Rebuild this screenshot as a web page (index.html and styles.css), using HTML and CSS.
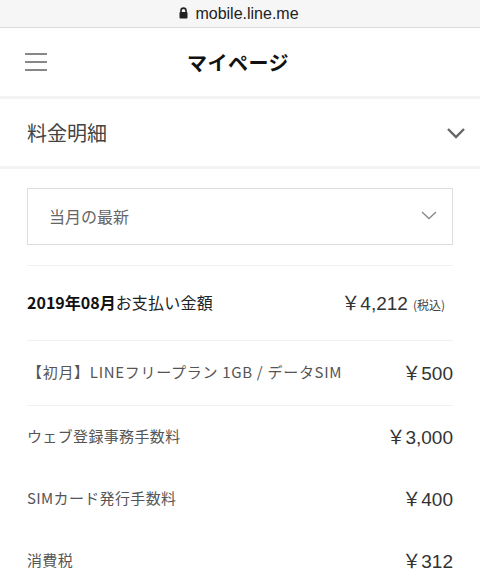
FILE: index.html
```html
<!DOCTYPE html>
<html lang="ja">
<head>
<meta charset="utf-8">
<title>マイページ</title>
<link rel="stylesheet" href="styles.css">
</head>
<body>
<div class="urlbar">
  <svg class="lock" width="9" height="12" viewBox="0 0 9 12"><path d="M2 5.5V3.6a2.5 2.5 0 0 1 5 0V5.5" fill="none" stroke="#222" stroke-width="1.6"/><rect x="0.5" y="5" width="8" height="6.5" rx="1" fill="#222"/></svg>
  <span>mobile.line.me</span>
</div>
<header class="header">
  <div class="burger"><span></span><span></span><span></span></div>
  <h1 class="title">マイページ</h1>
  <div></div>
</header>
<div class="sep"></div>
<div class="section-head">
  <h2>料金明細</h2>
  <svg width="20" height="12" viewBox="0 0 20 12"><path d="M2 2l8 8 8-8" fill="none" stroke="#666" stroke-width="2.4"/></svg>
</div>
<div class="sep"></div>
<main class="content">
  <div class="select">
    <span>当月の最新</span>
    <svg width="16" height="9" viewBox="0 0 16 9"><path d="M1 1l7 6.5L15 1" fill="none" stroke="#888" stroke-width="1.3"/></svg>
  </div>
  <div class="row total">
    <div><b>2019年08月</b>お支払い金額</div>
    <div class="total-amt">￥4,212<small>(税込)</small></div>
  </div>
  <div class="row item first">
    <span>【初月】LINEフリープラン 1GB / データSIM</span>
    <span class="amt">￥500</span>
  </div>
  <div class="row item">
    <span>ウェブ登録事務手数料</span>
    <span class="amt">￥3,000</span>
  </div>
  <div class="row item">
    <span>SIMカード発行手数料</span>
    <span class="amt">￥400</span>
  </div>
  <div class="row item">
    <span>消費税</span>
    <span class="amt">￥312</span>
  </div>
</main>
</body>
</html>
```
FILE: styles.css
```css
html, body {
  margin: 0;
  padding: 0;
  background: #fff;
  font-family: "Noto Sans CJK JP", "Noto Sans", sans-serif;
  color: #333;
  overflow: hidden;
}
.urlbar {
  height: 27px;
  background: #f6f6f6;
  border-bottom: 1px solid #dcdcdc;
  display: flex;
  align-items: center;
  justify-content: center;
  gap: 7px;
  font-family: "Liberation Sans", "Noto Sans", sans-serif;
  font-size: 16px;
  color: #222;
  padding-right: 2px;
}
.lock { margin-top: -1px; }
.header {
  height: 68px;
  display: grid;
  grid-template-columns: 1fr auto 1fr;
  align-items: center;
  padding-left: 25px;
  padding-right: 25px;
}
.burger {
  display: flex;
  flex-direction: column;
  gap: 6px;
  width: 22px;
}
.burger span {
  display: block;
  height: 2px;
  background: #888;
}
.title {
  margin: 0;
  font-size: 20px;
  font-weight: 700;
  color: #111;
  letter-spacing: 0.5px;
  position: relative;
  left: -2px;
}
.sep {
  height: 3px;
  background: #f3f3f3;
}
.section-head {
  height: 67px;
  display: flex;
  align-items: center;
  justify-content: space-between;
  padding: 0 14px 0 27px;
}
.section-head h2 {
  margin: 0;
  font-size: 20px;
  font-weight: 400;
  color: #444;
}
.content {
  padding: 19px 27px 0;
}
.select {
  height: 53px;
  border: 1px solid #dedede;
  display: flex;
  align-items: center;
  justify-content: space-between;
  padding: 0 15px 2px 21px;
  font-size: 16px;
  color: #666;
}
.row {
  display: flex;
  align-items: center;
  justify-content: space-between;
  box-sizing: border-box;
  padding-bottom: 3px;
}
.total {
  margin-top: 20px;
  height: 76px;
  border-top: 1px solid #f0f0f0;
  border-bottom: 1px solid #f0f0f0;
  font-size: 16px;
  color: #222;
  letter-spacing: 0.2px;
}
.total b { font-weight: 700; color: #111; letter-spacing: 0; }
.total-amt {
  font-family: "Liberation Sans", "Noto Sans CJK JP", sans-serif;
  font-size: 19px;
  color: #333;
  padding-right: 8px;
  letter-spacing: 0;
}
.total-amt small {
  font-family: "Noto Sans CJK JP", sans-serif;
  font-size: 12px;
  margin-left: 5px;
  color: #444;
}
.item {
  height: 62px;
  font-size: 15px;
  color: #555;
  letter-spacing: 0.35px;
}
.item.first {
  height: 65px;
  border-bottom: 1px solid #f0f0f0;
  letter-spacing: 0.7px;
}
.amt {
  font-family: "Liberation Sans", "Noto Sans CJK JP", sans-serif;
  font-size: 19px;
  color: #333;
  letter-spacing: 0;
}
```
